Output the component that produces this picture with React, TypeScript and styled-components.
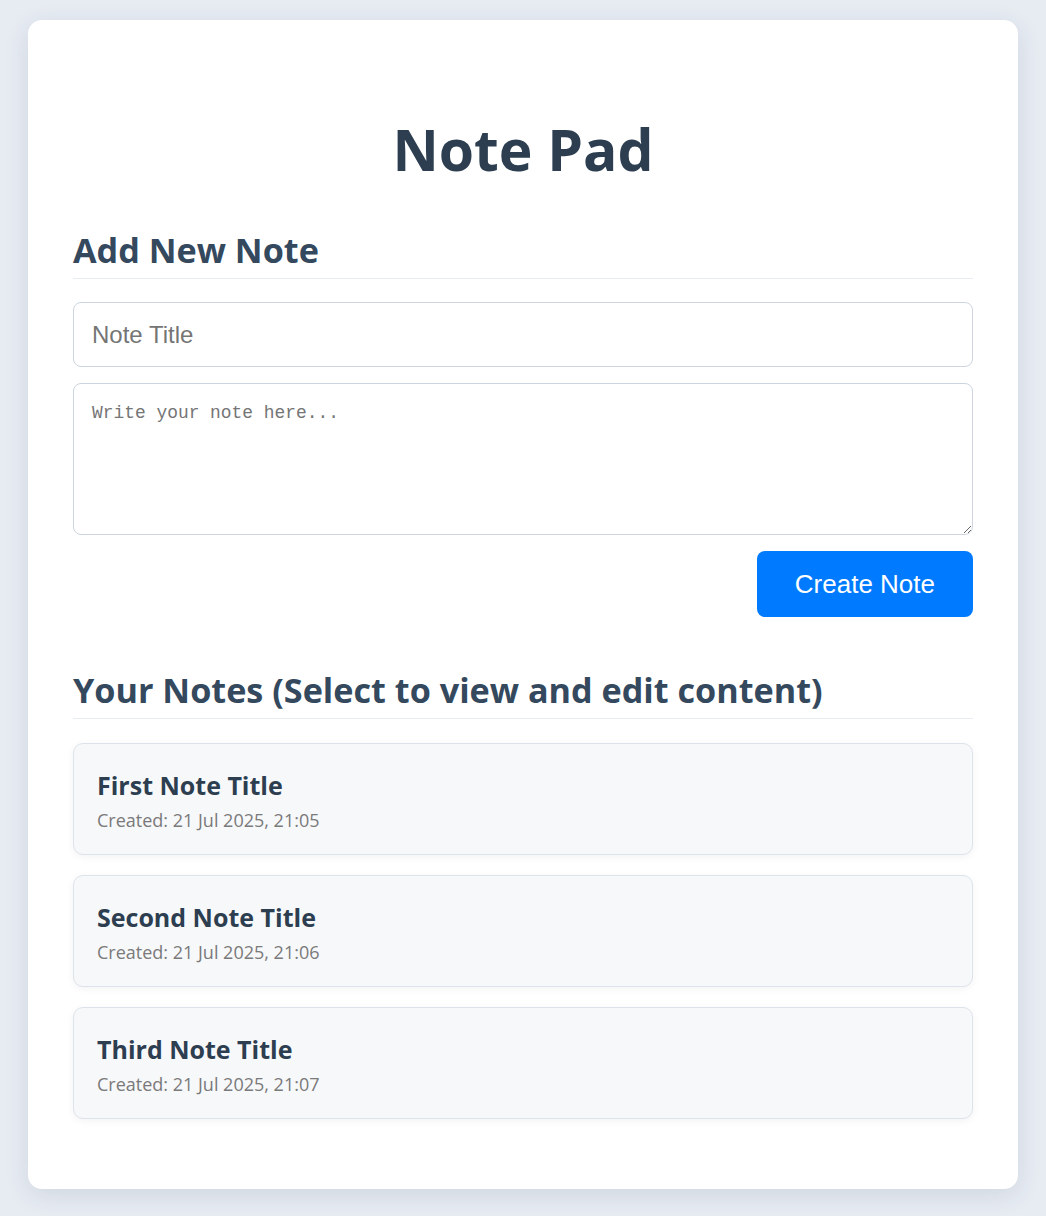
import React from 'react';
import styled, { createGlobalStyle } from 'styled-components';

const GlobalStyle = createGlobalStyle`
  * { box-sizing: border-box; }
  body {
    margin: 0;
    background: #e7ecf3;
    font-family: "Open Sans", "Noto Sans", sans-serif;
    color: #2c3e50;
  }
`;

const Page = styled.div`
  padding: 20px 28px 27px;
`;

const Container = styled.main`
  max-width: 990px;
  margin: 0 auto;
  background: #ffffff;
  border-radius: 14px;
  box-shadow: 0 6px 24px rgba(40, 60, 90, 0.12);
  padding: 101px 45px 70px;
`;

const Title = styled.h1`
  margin: 0 0 50px;
  text-align: center;
  font-size: 57px;
  line-height: 1;
  font-weight: 700;
  color: #2c3e50;
`;

const SectionTitle = styled.h2`
  margin: 0 0 23px;
  padding-bottom: 6px;
  border-bottom: 1px solid #e8ebef;
  font-size: 34.2px;
  line-height: 44px;
  font-weight: 700;
  color: #34495e;
`;

const Form = styled.form`
  display: flex;
  flex-direction: column;
  gap: 16px;
  margin-bottom: 51px;
`;

const TitleInput = styled.input`
  width: 100%;
  height: 65px;
  padding: 0 18px;
  border: 1px solid #cdd6e0;
  border-radius: 8px;
  font-family: "Liberation Sans", Arial, sans-serif;
  font-size: 24px;
  color: #333;
  outline: none;
  &::placeholder { color: #757575; }
`;

const ContentArea = styled.textarea`
  width: 100%;
  height: 152px;
  padding: 18px 18px;
  border: 1px solid #cdd6e0;
  border-radius: 8px;
  font-family: "Liberation Mono", "DejaVu Sans Mono", monospace;
  font-size: 17.9px;
  line-height: 22px;
  resize: vertical;
  outline: none;
  &::placeholder { color: #757575; }
`;

const Actions = styled.div`
  display: flex;
  justify-content: flex-end;
`;

const CreateButton = styled.button`
  height: 66px;
  padding: 0 38px;
  border: none;
  border-radius: 8px;
  background: #007bff;
  color: #ffffff;
  font-family: "Liberation Sans", Arial, sans-serif;
  font-size: 26px;
  cursor: pointer;
`;

const NoteList = styled.ul`
  list-style: none;
  margin: 0;
  padding: 1px 0 0;
  display: flex;
  flex-direction: column;
  gap: 20px;
`;

const NoteCard = styled.li`
  height: 112px;
  padding: 26px 23px 0;
  background: #f7f8fa;
  border: 1px solid #dde3ea;
  border-radius: 10px;
  box-shadow: 0 2px 8px rgba(0, 0, 0, 0.05);
  cursor: pointer;
`;

const NoteTitle = styled.h3`
  margin: 0 0 8px;
  font-size: 25px;
  line-height: 30px;
  font-weight: 700;
  color: #2c3e50;
`;

const NoteDate = styled.p`
  margin: 0;
  font-size: 18px;
  line-height: 24px;
  color: #7a7a7a;
`;

const notes = [
  { id: 1, title: 'First Note Title', created: '21 Jul 2025, 21:05' },
  { id: 2, title: 'Second Note Title', created: '21 Jul 2025, 21:06' },
  { id: 3, title: 'Third Note Title', created: '21 Jul 2025, 21:07' },
];

export default function App() {
  return (
    <Page>
      <GlobalStyle />
      <Container>
        <Title>Note Pad</Title>
        <SectionTitle>Add New Note</SectionTitle>
        <Form onSubmit={e => e.preventDefault()}>
          <TitleInput type="text" placeholder="Note Title" />
          <ContentArea placeholder="Write your note here..." />
          <Actions>
            <CreateButton type="submit">Create Note</CreateButton>
          </Actions>
        </Form>
        <SectionTitle>Your Notes (Select to view and edit content)</SectionTitle>
        <NoteList>
          {notes.map(note => (
            <NoteCard key={note.id}>
              <NoteTitle>{note.title}</NoteTitle>
              <NoteDate>Created: {note.created}</NoteDate>
            </NoteCard>
          ))}
        </NoteList>
      </Container>
    </Page>
  );
}
